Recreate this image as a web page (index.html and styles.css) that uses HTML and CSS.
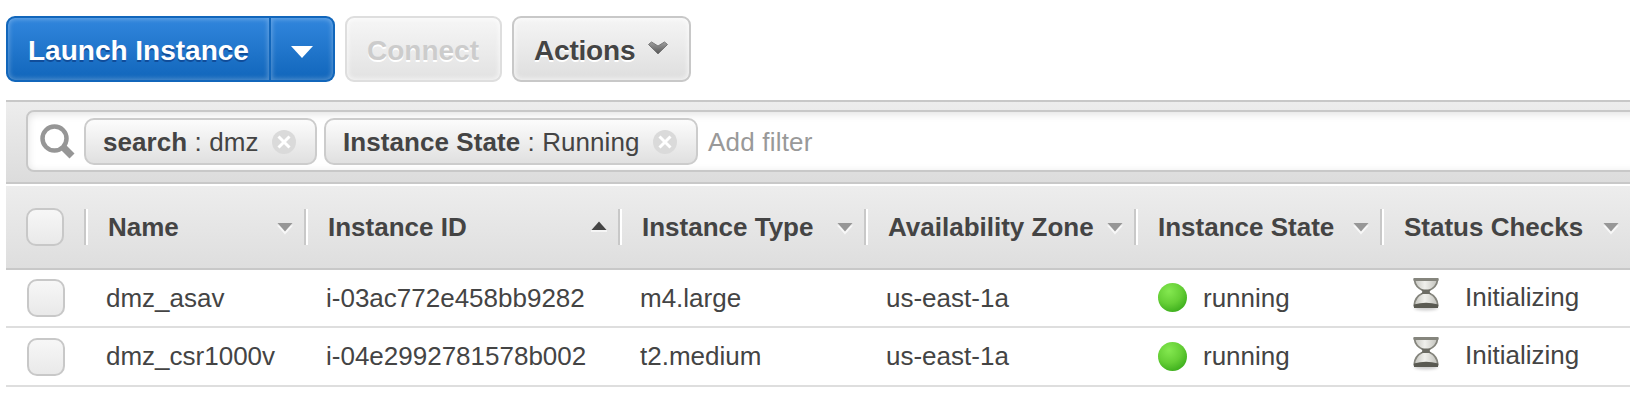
FILE: index.html
```html
<!DOCTYPE html>
<html lang="en">
<head>
<meta charset="utf-8">
<title>Instances</title>
<link rel="stylesheet" href="styles.css">
</head>
<body>
<svg class="defs" width="0" height="0" aria-hidden="true">
  <defs>
    <linearGradient id="glass" x1="0" x2="1" y1="0" y2="0">
      <stop offset="0" stop-color="#c4c4be"/><stop offset=".45" stop-color="#f0f0ec"/><stop offset="1" stop-color="#c0c0ba"/>
    </linearGradient>
    <linearGradient id="chev" x1="0" x2="0" y1="0" y2="1">
      <stop offset="0" stop-color="#a0a0a0"/><stop offset="1" stop-color="#555"/>
    </linearGradient>
    <symbol id="hourglass" viewBox="0 0 32 36">
      <ellipse class="hg-shadow" cx="16" cy="31" rx="12" ry="2.500"/>
      <path fill="url(#glass)" stroke="#85857d" stroke-width="1.800" d="M4.500 3C5 8 7.500 11 13 13.500V16C7.500 18.500 4.500 22 4.200 28.500H27.800C27.500 22 24.500 18.500 19 16V13.500C24.500 11 27 8 27.500 3Z"/>
      <path fill="#6c6c64" d="M11 12.500h10l-2 2.300 2 2.200H11l2-2.200z"/>
      <path fill="#5a5a52" d="M4 27.500q12-3.500 24 0V31H4z"/>
      <path fill="#85857d" d="M3.500 1h25v2.600h-25z"/>
    </symbol>
    <symbol id="remove" viewBox="0 0 24 24">
      <circle cx="12" cy="12" r="12" fill="#dadada"/>
      <path d="M6.500 6.500l11 11M17.500 6.500l-11 11" stroke="#fff" stroke-width="3"/>
    </symbol>
    <symbol id="sort" viewBox="0 0 16 12">
      <path d="M0 2.500h16L8 11.500z" fill="#f8f8f8"/>
      <path d="M.5 0h15L8 8.500z" fill="#979797"/>
    </symbol>
  </defs>
</svg>

<div class="toolbar">
  <div class="split-button">
    <button class="btn primary launch">Launch Instance</button>
    <button class="btn primary toggle" aria-label="More launch options"><svg width="22" height="12" viewBox="0 0 22 12"><path d="M0 0h22L11 12z" fill="#fff"/></svg></button>
  </div>
  <button class="btn disabled">Connect</button>
  <button class="btn actions">Actions<svg class="chevron" width="20" height="14" viewBox="0 0 20 14"><path d="M.5 3.500L3.500 1l6.500 4 6.500-4 3 2.500L10 13z" fill="url(#chev)" stroke="#777" stroke-width="1"/></svg></button>
</div>

<div class="filter-bar">
  <div class="search-box">
    <svg class="magnifier" width="36" height="36" viewBox="0 0 36 36"><circle cx="14.500" cy="14.500" r="12" fill="none" stroke="#969696" stroke-width="4.500"/><path d="M22.500 22.500l9.500 9.500" stroke="#969696" stroke-width="7"/></svg>
    <div class="chip chip-search"><span><b>search</b> : dmz</span><svg width="24" height="24"><use href="#remove"/></svg></div>
    <div class="chip chip-state"><span><b>Instance State</b> : Running</span><svg width="24" height="24"><use href="#remove"/></svg></div>
    <span class="placeholder">Add filter</span>
  </div>
</div>

<div class="table">
  <div class="row head">
    <div class="check-cell"><span class="checkbox"></span></div>
    <div class="th"><span>Name</span><svg width="16" height="12"><use href="#sort"/></svg></div>
    <div class="th"><span>Instance ID</span><svg class="ascending" width="16" height="12" viewBox="0 0 16 12"><path d="M0 9h16v2H0z" fill="#f5f5f5"/><path d="M.5 9h15L8 .5z" fill="#444"/></svg></div>
    <div class="th"><span>Instance Type</span><svg width="16" height="12"><use href="#sort"/></svg></div>
    <div class="th"><span>Availability Zone</span><svg width="16" height="12"><use href="#sort"/></svg></div>
    <div class="th"><span>Instance State</span><svg width="16" height="12"><use href="#sort"/></svg></div>
    <div class="th"><span>Status Checks</span><svg width="16" height="12"><use href="#sort"/></svg></div>
  </div>
  <div class="row item first">
    <div class="check-cell"><span class="checkbox"></span></div>
    <div class="td">dmz_asav</div>
    <div class="td">i-03ac772e458bb9282</div>
    <div class="td">m4.large</div>
    <div class="td">us-east-1a</div>
    <div class="td"><i class="dot"></i>running</div>
    <div class="td status"><svg width="32" height="36"><use href="#hourglass"/></svg><span>Initializing</span></div>
  </div>
  <div class="row item second">
    <div class="check-cell"><span class="checkbox"></span></div>
    <div class="td">dmz_csr1000v</div>
    <div class="td">i-04e2992781578b002</div>
    <div class="td">t2.medium</div>
    <div class="td">us-east-1a</div>
    <div class="td"><i class="dot"></i>running</div>
    <div class="td status"><svg width="32" height="36"><use href="#hourglass"/></svg><span>Initializing</span></div>
  </div>
</div>
</body>
</html>
```

FILE: styles.css
```css
* { box-sizing: border-box; }

body {
  margin: 0;
  padding: 16px 0 0 6px;
  background: #fff;
  color: #444;
  font-family: "Liberation Sans", Arial, Helvetica, sans-serif;
  font-size: 26px;
  overflow: hidden;
}

svg { display: block; flex: none; }
.defs { position: absolute; }

/* Toolbar */
.toolbar { display: flex; gap: 10px; height: 84px; align-items: flex-start; }
.split-button { display: flex; width: 329px; }

.btn {
  display: flex;
  align-items: center;
  height: 66px;
  padding: 3px 20px 0 20px;
  border: 2px solid #c8c8c8;
  border-radius: 9px;
  background: linear-gradient(#f5f5f5, #dedede);
  box-shadow: inset 0 0 5px 1px rgba(255, 255, 255, .7);
  color: #444;
  font: bold 28px "Liberation Sans", Arial, sans-serif;
  text-shadow: 0 2px 0 #fff;
  white-space: nowrap;
}

.primary {
  border-color: #1166bb;
  background: linear-gradient(#3186dd, #1166bb);
  box-shadow: inset 0 0 5px 1px rgba(255, 255, 255, .3);
  color: #fff;
  text-shadow: 0 2px 0 #104d9a;
}

.launch { width: 265px; padding: 3px 0 0 20px; border-radius: 9px 0 0 9px; }
.toggle { width: 64px; padding: 5px 0 0; border-left: 0; border-radius: 0 9px 9px 0; justify-content: center; }
.disabled { width: 157px; border-color: #dedede; background: linear-gradient(#f6f6f6, #e2e2e2); color: #ccc; }
.actions { width: 179px; letter-spacing: -.2px; }
.chevron { margin: -6px 0 0 13px; }

/* Filter bar */
.filter-bar {
  height: 84px;
  padding: 8px 0 0 20px;
  border: solid #c8c8c8;
  border-width: 2px 0;
  background: linear-gradient(#ededed, #dcdcdc);
}

/* The box runs past the right edge of the window */
.search-box {
  display: flex;
  align-items: center;
  height: 62px;
  margin-right: -20px;
  padding-left: 12px;
  border: 2px solid #c8c8c8;
  border-radius: 8px;
  background: #fff;
  box-shadow: inset 0 2px 8px rgba(0, 0, 0, .12);
}

.magnifier { margin: 2px 8px 0 0; }

.chip {
  display: flex;
  align-items: center;
  justify-content: space-between;
  height: 47px;
  margin-right: 7px;
  padding: 1px 19px 0 17px;
  border: 2px solid #ccc;
  border-radius: 10px;
  background: linear-gradient(#fcfcfc, #e0e0e0);
  letter-spacing: .07px;
  white-space: nowrap;
}
.chip span { padding-top: 1px; }

.chip-search { width: 233px; }
.chip-state { width: 374px; margin-right: 10px; }
.placeholder { padding-top: 2px; color: #999; letter-spacing: .2px; }

/* Table */
.table { margin-top: 2px; }
.row { display: grid; grid-template-columns: 78px 220px 314px 246px 270px 246px 250px; }
.head {
  height: 84px;
  align-items: center;
  padding-bottom: 1px;
  border-bottom: 2px solid #c8c8c8;
  background: linear-gradient(#ededed, #dedede);
  font-weight: bold;
}

.check-cell { padding-left: 20px; }
.checkbox {
  display: block;
  width: 38px;
  height: 38px;
  border: 2px solid #c8c8c8;
  border-radius: 10px;
  background: linear-gradient(#f7f7f7, #e9e9e9);
}

.th {
  display: flex;
  align-items: center;
  justify-content: space-between;
  height: 36px;
  padding: 0 11px 0 22px;
  border-left: 2px solid #c8c8c8;
  box-shadow: inset 2px 0 #fff;
  white-space: nowrap;
}
.th span { padding-top: 2px; }
.th svg { margin-top: 5px; }
.th .ascending { margin-top: 0; }

.item { align-items: center; height: 58px; border-bottom: 2px solid #dedede; }
.second { height: 59px; }
.item .check-cell { padding-left: 21px; }
.td { display: flex; align-items: center; padding-left: 22px; white-space: nowrap; }
.dot {
  width: 29px;
  height: 29px;
  margin: -1px 16px 0 2px;
  border-radius: 50%;
  background: radial-gradient(circle at 38% 28%, #84e850 0%, #66cf36 45%, #3fb01e 78%, #2b9410 100%);
}
.status { padding-left: 30px; }
.status svg { margin: -6px 23px 0 0; }
.status span { margin-top: -2px; }
.hg-shadow { fill: #000; opacity: .2; filter: blur(1.5px); }
```
